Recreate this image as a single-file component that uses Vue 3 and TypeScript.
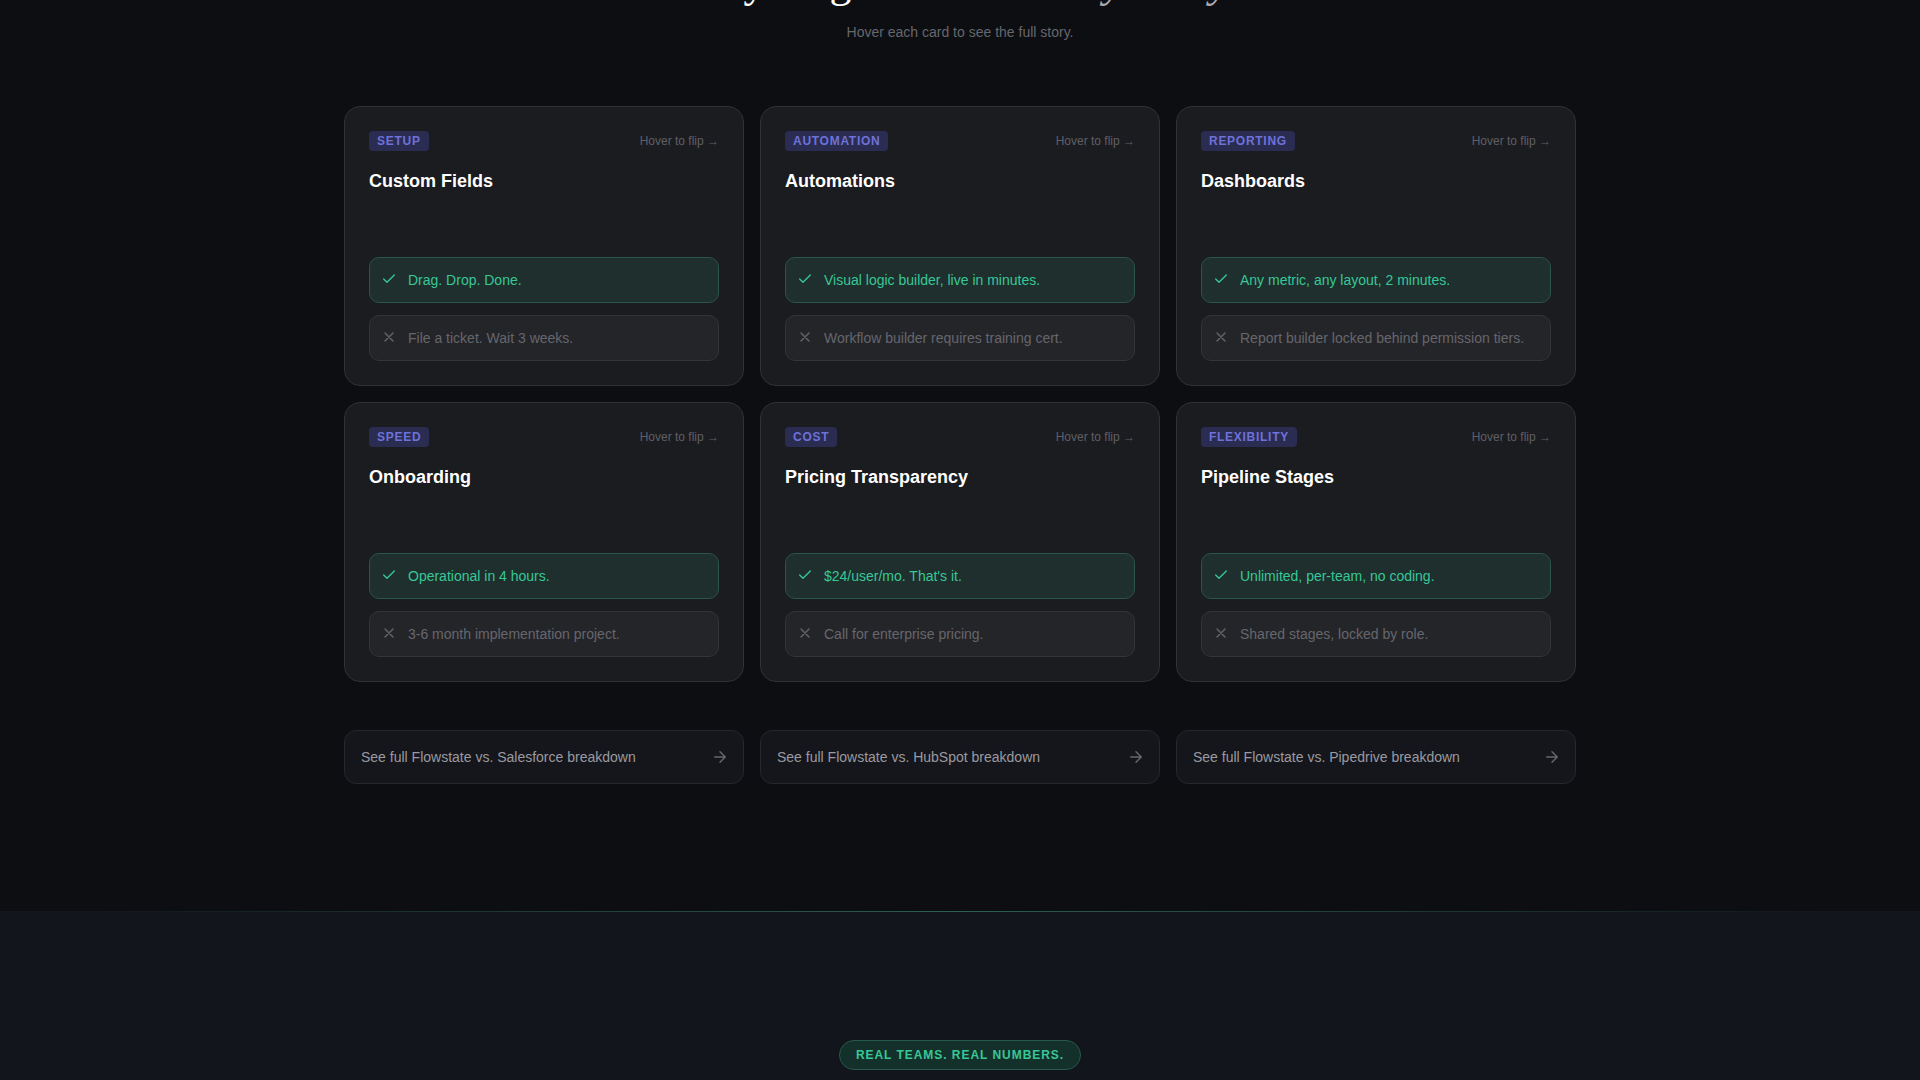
<script setup lang="ts">
interface Card {
  tag: string
  title: string
  win: string
  lose: string
}

const cards: Card[] = [
  { tag: 'SETUP', title: 'Custom Fields', win: 'Drag. Drop. Done.', lose: 'File a ticket. Wait 3 weeks.' },
  { tag: 'AUTOMATION', title: 'Automations', win: 'Visual logic builder, live in minutes.', lose: 'Workflow builder requires training cert.' },
  { tag: 'REPORTING', title: 'Dashboards', win: 'Any metric, any layout, 2 minutes.', lose: 'Report builder locked behind permission tiers.' },
  { tag: 'SPEED', title: 'Onboarding', win: 'Operational in 4 hours.', lose: '3-6 month implementation project.' },
  { tag: 'COST', title: 'Pricing Transparency', win: '$24/user/mo. That\'s it.', lose: 'Call for enterprise pricing.' },
  { tag: 'FLEXIBILITY', title: 'Pipeline Stages', win: 'Unlimited, per-team, no coding.', lose: 'Shared stages, locked by role.' }
]

const rivals = ['Salesforce', 'HubSpot', 'Pipedrive']
</script>

<template>
  <div class="page">
    <section class="compare">
      <header class="head">
        <h2 class="heading">Everything hard made <em>easy. Truly.</em></h2>
        <p class="sub">Hover each card to see the full story.</p>
      </header>

      <div class="grid">
        <article v-for="card in cards" :key="card.tag" class="card">
          <div class="card-top">
            <span class="tag">{{ card.tag }}</span>
            <span class="hint">Hover to flip →</span>
          </div>
          <h3 class="title">{{ card.title }}</h3>
          <div class="rows">
            <div class="row win">
              <svg class="icon" viewBox="0 0 24 24" fill="none" stroke="currentColor" stroke-width="2" stroke-linecap="round" stroke-linejoin="round">
                <path d="M20 6 9 17l-5-5" />
              </svg>
              <span>{{ card.win }}</span>
            </div>
            <div class="row lose">
              <svg class="icon" viewBox="0 0 24 24" fill="none" stroke="currentColor" stroke-width="2" stroke-linecap="round" stroke-linejoin="round">
                <path d="M18 6 6 18M6 6l12 12" />
              </svg>
              <span>{{ card.lose }}</span>
            </div>
          </div>
        </article>
      </div>

      <div class="links">
        <a v-for="rival in rivals" :key="rival" class="link">
          <span>See full Flowstate vs. {{ rival }} breakdown</span>
          <svg class="arrow" viewBox="0 0 24 24" fill="none" stroke="currentColor" stroke-width="2" stroke-linecap="round" stroke-linejoin="round">
            <path d="M5 12h14M12 5l7 7-7 7" />
          </svg>
        </a>
      </div>
    </section>

    <section class="proof">
      <span class="pill">REAL TEAMS. REAL NUMBERS.</span>
    </section>
  </div>
</template>

<style scoped>
.page {
  height: 1080px;
  overflow: hidden;
  font-family: "Liberation Sans", Arial, sans-serif;
  background: #0d0e12;
}

.compare {
  height: 911px;
  overflow: hidden;
  display: flex;
  flex-direction: column;
  align-items: center;
}

.head {
  display: flex;
  flex-direction: column;
  align-items: center;
  margin-top: -43px;
}

.heading {
  margin: 0;
  padding-right: 20px;
  font-family: "Liberation Serif", "Times New Roman", serif;
  font-size: 44px;
  font-weight: 400;
  line-height: 52px;
  letter-spacing: -0.02em;
  color: #fff;
  white-space: nowrap;
}

.heading em {
  color: #a9a9ae;
}

.sub {
  margin: 13px 0 0;
  font-size: 14px;
  line-height: 20px;
  color: #66666d;
}

.grid {
  width: 1232px;
  margin-top: 64px;
  display: grid;
  grid-template-columns: repeat(3, 1fr);
  gap: 16px;
}

.card {
  height: 280px;
  box-sizing: border-box;
  padding: 24px;
  display: flex;
  flex-direction: column;
  background: #1b1c20;
  border: 1px solid #303135;
  border-radius: 16px;
}

.card-top {
  display: flex;
  justify-content: space-between;
  align-items: center;
}

.tag {
  padding: 0 8px;
  font-size: 12px;
  font-weight: 700;
  line-height: 20px;
  letter-spacing: 0.06em;
  color: #6e72d8;
  background: #2a2c52;
  border-radius: 4px;
}

.hint {
  font-size: 12px;
  color: #5f5f66;
}

.title {
  margin: 18px 0 0;
  font-size: 18px;
  font-weight: 700;
  line-height: 24px;
  color: #fff;
}

.rows {
  margin-top: auto;
  display: flex;
  flex-direction: column;
  gap: 12px;
}

.row {
  display: flex;
  align-items: flex-start;
  gap: 11px;
  padding: 12px 11px;
  font-size: 14px;
  line-height: 20px;
  border: 1px solid;
  border-radius: 10px;
}

.win {
  color: #38c797;
  background: #1e2f2d;
  border-color: #2a5548;
}

.lose {
  color: #66666d;
  background: #242529;
  border-color: #333438;
}

.icon {
  width: 16px;
  height: 16px;
  margin-top: 1px;
  flex-shrink: 0;
}

.links {
  width: 1232px;
  margin-top: 48px;
  display: grid;
  grid-template-columns: repeat(3, 1fr);
  gap: 16px;
}

.link {
  height: 54px;
  box-sizing: border-box;
  padding: 0 14px 0 16px;
  display: flex;
  justify-content: space-between;
  align-items: center;
  font-size: 14px;
  color: #9a9aa0;
  background: #15161b;
  border: 1px solid #26272c;
  border-radius: 12px;
}

.arrow {
  width: 18px;
  height: 18px;
  color: #66666d;
}

.proof {
  position: relative;
  height: 169px;
  padding-top: 129px;
  display: flex;
  justify-content: center;
  align-items: flex-start;
  background: #12151c;
}

.proof::before {
  content: "";
  position: absolute;
  top: 0;
  left: 5%;
  right: 5%;
  height: 1px;
  background: linear-gradient(90deg, transparent, #2c5f50, transparent);
}

.pill {
  height: 30px;
  box-sizing: border-box;
  padding: 0 16px;
  display: flex;
  align-items: center;
  font-size: 12px;
  font-weight: 700;
  letter-spacing: 0.08em;
  color: #38c797;
  background: #14302b;
  border: 1px solid #28594b;
  border-radius: 15px;
}
</style>

<style>
body {
  background: #0d0e12;
}
</style>
